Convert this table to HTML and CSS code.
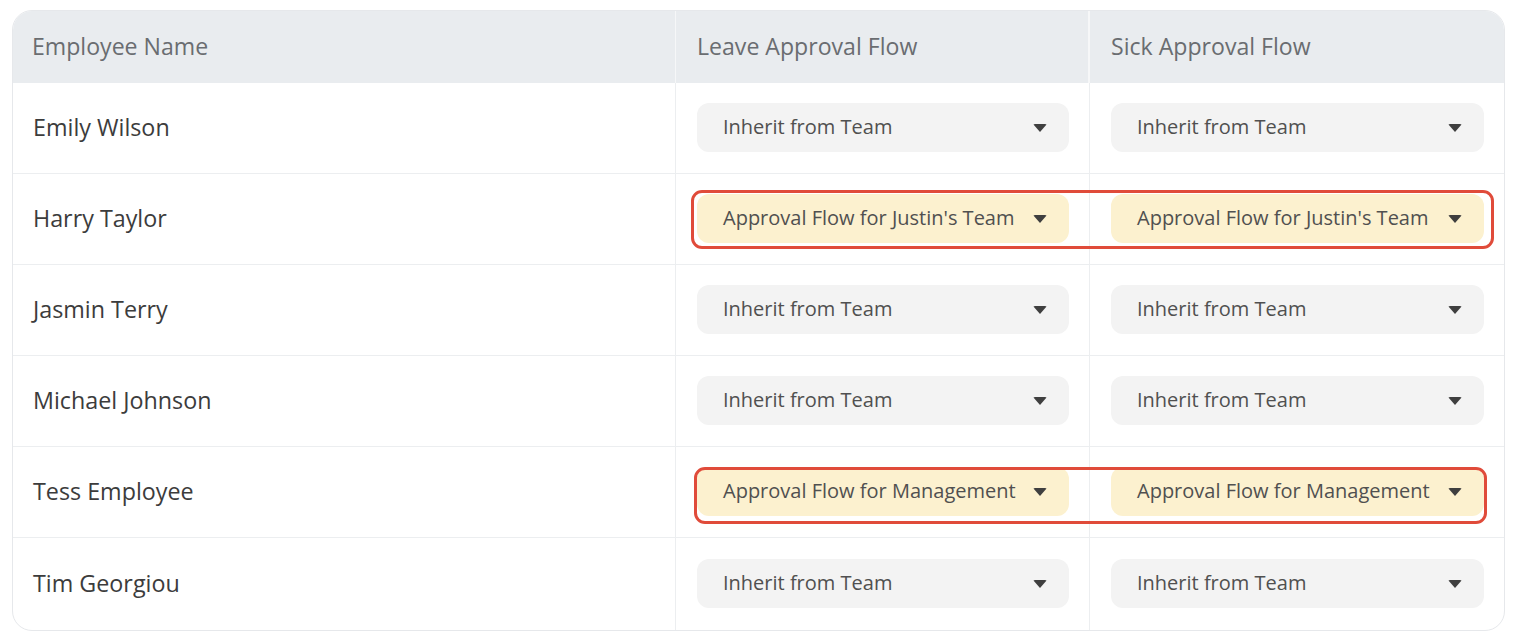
FILE: index.html
```html
<!DOCTYPE html>
<html>
<head>
<meta charset="utf-8">
<link rel="stylesheet" href="styles.css">
</head>
<body>
<div class="table">
  <div class="row head">
    <div class="cell">Employee Name</div>
    <div class="cell">Leave Approval Flow</div>
    <div class="cell">Sick Approval Flow</div>
  </div>
  <div class="row">
    <div class="cell name">Emily Wilson</div>
    <div class="cell"><div class="select"><span>Inherit from Team</span><i class="caret"></i></div></div>
    <div class="cell"><div class="select"><span>Inherit from Team</span><i class="caret"></i></div></div>
  </div>
  <div class="row">
    <div class="cell name">Harry Taylor</div>
    <div class="cell"><div class="select custom"><span>Approval Flow for Justin's Team</span><i class="caret"></i></div></div>
    <div class="cell"><div class="select custom"><span>Approval Flow for Justin's Team</span><i class="caret"></i></div></div>
    <div class="mark mark-a"></div>
  </div>
  <div class="row">
    <div class="cell name">Jasmin Terry</div>
    <div class="cell"><div class="select"><span>Inherit from Team</span><i class="caret"></i></div></div>
    <div class="cell"><div class="select"><span>Inherit from Team</span><i class="caret"></i></div></div>
  </div>
  <div class="row">
    <div class="cell name">Michael Johnson</div>
    <div class="cell"><div class="select"><span>Inherit from Team</span><i class="caret"></i></div></div>
    <div class="cell"><div class="select"><span>Inherit from Team</span><i class="caret"></i></div></div>
  </div>
  <div class="row">
    <div class="cell name">Tess Employee</div>
    <div class="cell"><div class="select custom"><span>Approval Flow for Management</span><i class="caret"></i></div></div>
    <div class="cell"><div class="select custom"><span>Approval Flow for Management</span><i class="caret"></i></div></div>
    <div class="mark mark-b"></div>
  </div>
  <div class="row last">
    <div class="cell name">Tim Georgiou</div>
    <div class="cell"><div class="select"><span>Inherit from Team</span><i class="caret"></i></div></div>
    <div class="cell"><div class="select"><span>Inherit from Team</span><i class="caret"></i></div></div>
  </div>
</div>
</body>
</html>
```

FILE: styles.css
```css
* { box-sizing: border-box; }
html, body { margin: 0; padding: 0; background: #fff; }
body {
  font-family: "Open Sans", "Noto Sans", sans-serif;
  padding: 10px 0 0 12px;
}
.table {
  width: 1493px;
  border: 1px solid #e6e8eb;
  border-radius: 20px;
  overflow: hidden;
}
.row {
  position: relative;
  display: grid;
  grid-template-columns: 663px 414px 414px;
  height: 91px;
  border-bottom: 1px solid #eceef0;
}
.row.last { border-bottom: none; height: 92px; }
.row.head {
  height: 72px;
  background: #e9ecef;
  border-bottom: none;
}
.cell {
  display: flex;
  align-items: center;
  padding: 0 20px;
  border-right: 1px solid #eceef0;
}
.cell:nth-child(3) { border-right: none; }
.head .cell {
  font-size: 23.1px;
  color: #6a6d71;
  padding-left: 21px;
  padding-bottom: 2px;
  border-right: 2px solid #f6f7f8;
}
.head .cell:first-child { padding-left: 19px; border-right-width: 1px; }
.head .cell:nth-child(3) { border-right: none; }
.name {
  font-size: 23.3px;
  color: #3c3c3c;
  padding-left: 20px;
  padding-bottom: 2px;
}
.select {
  width: 100%;
  height: 49px;
  border-radius: 12px;
  background: #f3f3f3;
  display: flex;
  align-items: center;
  justify-content: space-between;
  padding: 0 22px 2px 26px;
  font-size: 20px;
  color: #505050;
  margin-top: -1px;
  margin-left: 1px;
}
.select.custom { background: #fcf1cf; }
.caret {
  width: 0;
  height: 0;
  border-left: 7px solid transparent;
  border-right: 7px solid transparent;
  border-top: 8px solid #3f3f3f;
  border-radius: 2px;
  margin-top: 2px;
}
.mark {
  position: absolute;
  border: 3px solid #e04b3a;
  border-radius: 11px;
  pointer-events: none;
}
.mark-a { left: 678px; top: 16px; width: 803px; height: 59px; }
.mark-b { left: 681px; top: 20px; width: 793px; height: 57px; }
```
